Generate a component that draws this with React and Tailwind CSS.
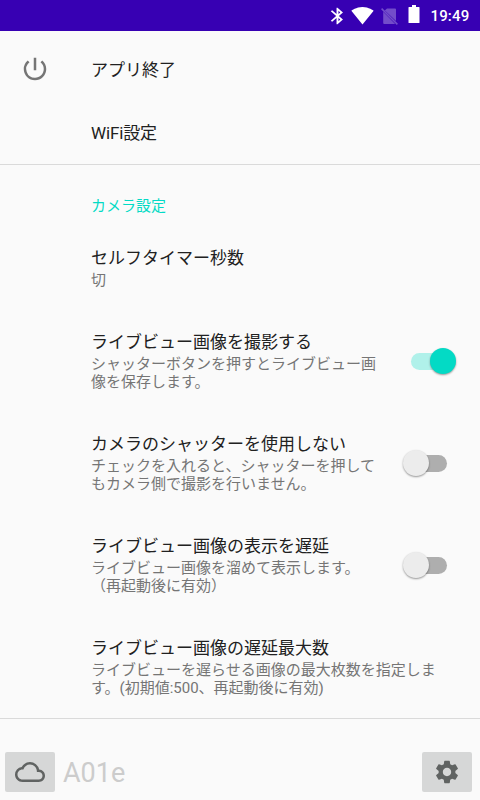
import { MdBluetooth, MdCloudQueue, MdPowerSettingsNew, MdSettings, MdSignalWifi4Bar } from 'react-icons/md';

const SWITCH_ROWS = [
  {
    title: 'ライブビュー画像を撮影する',
    lines: ['シャッターボタンを押すとライブビュー画', '像を保存します。'],
    on: true,
  },
  {
    title: 'カメラのシャッターを使用しない',
    lines: ['チェックを入れると、シャッターを押して', 'もカメラ側で撮影を行いません。'],
    on: false,
  },
  {
    title: 'ライブビュー画像の表示を遅延',
    lines: ['ライブビュー画像を溜めて表示します。', '（再起動後に有効）'],
    on: false,
  },
];

const StatusBar = () => (
  <header className="flex h-[31px] shrink-0 items-center bg-[#3700b3] pl-[326px] text-white">
    <MdBluetooth preserveAspectRatio="none" className="h-[20px] w-[23px]" />
    <MdSignalWifi4Bar className="ml-[2px] h-[23px] w-[23px]" />
    {/* No SIM */}
    <svg viewBox="0 0 18 20" className="ml-[7px] h-[20px] w-[18px]">
      <path d="M6 2.5h8a1 1 0 0 1 1 1v11.5L3.8 4.4zM2.2 5.7L14.2 18H3.2a1 1 0 0 1-1-1z" fill="#734dca" />
      <path d="M.6 2.6l15.8 15.8" stroke="#734dca" strokeWidth="1.5" />
    </svg>
    <svg viewBox="0 0 12 18" className="ml-[9px] mb-[3px] h-[18px] w-[12px]">
      <path d="M4 0h4v2h3q.5 0 .5.5v15q0 .5-.5.5H1q-.5 0-.5-.5v-15Q.5 2 1 2h3z" fill="currentColor" />
    </svg>
    <span className="ml-[10.5px] mt-[2px] text-[15px] font-medium tracking-[0.15px]">19:49</span>
  </header>
);

const Switch = ({ on }) => (
  <div className="relative mr-[24px] h-[27px] w-[53px] shrink-0">
    <div
      className={
        on
          ? 'absolute left-[8px] top-[5px] h-[17px] w-[36px] rounded-full bg-[#b0f1ea]'
          : 'absolute left-[8px] top-[5px] h-[17px] w-[36px] rounded-full bg-[#aeaeae]'
      }
    />
    <div
      className={
        on
          ? 'absolute left-[26.5px] top-0 size-[26px] rounded-full bg-[#03dac5] shadow-[0_1px_2px_rgba(0,0,0,0.4)]'
          : 'absolute left-0 top-0 size-[26px] rounded-full bg-[#ececec] shadow-[0_1px_2px_rgba(0,0,0,0.4)]'
      }
    />
  </div>
);

const Preference = ({ title, lines, children }) => (
  <div className="flex items-center justify-between pl-[91px]">
    <div className="pb-[21px] pt-[20px]">
      <div className="text-[17px] leading-[24px] text-[#212121]">{title}</div>
      <div className="mt-[1px] text-[15px] leading-[18px] text-[#757575]">
        {lines.map((line) => (
          <div key={line} className="whitespace-nowrap">{line}</div>
        ))}
      </div>
    </div>
    {children}
  </div>
);

const App = () => (
  <div className="flex h-[800px] w-[480px] flex-col overflow-hidden bg-[#fafafa] font-[Roboto,'Noto_Sans_CJK_JP',sans-serif]">
    <StatusBar />

    {/* App actions */}
    <section className="h-[134px] border-b border-[#dadada] text-[17px] text-[#212121]">
      <div className="flex h-[77px] items-center pl-[20px]">
        <MdPowerSettingsNew className="mr-[41px] mb-[1px] size-[30px] text-[#757575]" />
        <span className="pt-[2px]">アプリ終了</span>
      </div>
      <div className="flex h-[52px] items-center pl-[91px] tracking-[-0.15px]">WiFi設定</div>
    </section>

    {/* Camera settings */}
    <section className="h-[554px] border-b border-[#dadada]">
      <h2 className="h-[61px] pl-[91px] pt-[30px] text-[15px] leading-[22px] text-[#03dac5]">カメラ設定</h2>
      <Preference title="セルフタイマー秒数" lines={['切']} />
      {SWITCH_ROWS.map((row) => (
        <Preference key={row.title} title={row.title} lines={row.lines}>
          <Switch on={row.on} />
        </Preference>
      ))}
      <Preference
        title="ライブビュー画像の遅延最大数"
        lines={['ライブビューを遅らせる画像の最大枚数を指定しま', 'す。(初期値:500、再起動後に有効)']}
      />
    </section>

    {/* Connection bar */}
    <footer className="flex flex-1 items-end px-[5px] pb-[8px] pr-[8px]">
      <button className="flex h-[40px] w-[50px] items-center justify-center rounded-[2px] bg-[#d6d7d7]">
        <MdCloudQueue className="size-[30px] text-[#606362]" />
      </button>
      <span className="ml-[8px] flex-1 text-[27px] leading-[38px] text-[#cccccc]">A01e</span>
      <button className="flex h-[40px] w-[50px] items-center justify-center rounded-[2px] bg-[#d6d7d7]">
        <MdSettings className="size-[28px] text-[#606362]" />
      </button>
    </footer>
  </div>
);

export default App;
